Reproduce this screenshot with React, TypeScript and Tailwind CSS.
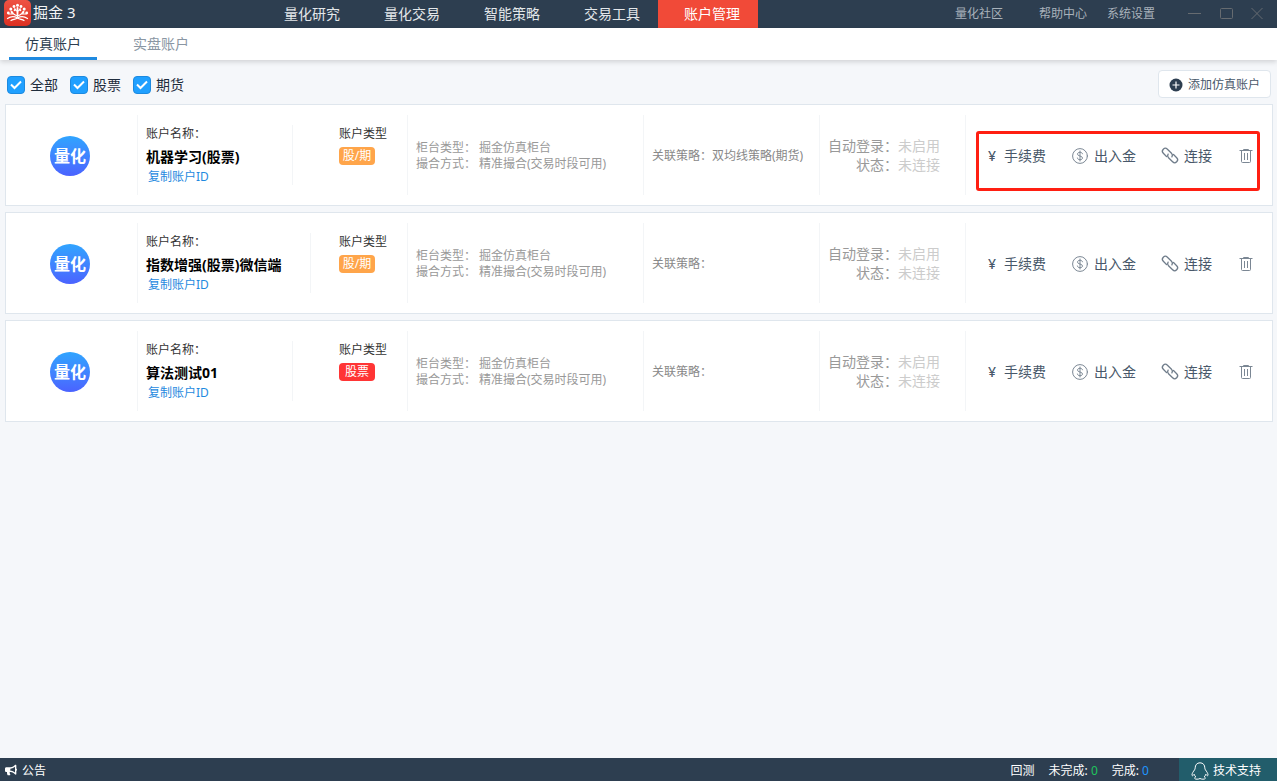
import React, { useState } from 'react';
import { FaBullhorn } from 'react-icons/fa';

const navItems = ['量化研究', '量化交易', '智能策略', '交易工具', '账户管理'];

const tabs = ['仿真账户', '实盘账户'];

const filters = ['全部', '股票', '期货'];

const accounts = [
  { name: '机器学习(股票)', type: '股/期', strategy: '双均线策略(期货)', highlighted: true },
  { name: '指数增强(股票)微信端', type: '股/期', strategy: '' },
  { name: '算法测试01', type: '股票', strategy: '' },
];

const Logo = () => (
  <svg className="h-[26px] w-[27px]" viewBox="0 0 27 26" aria-hidden="true">
    <defs>
      <linearGradient id="logoRed" x1="0" y1="0" x2="0" y2="1">
        <stop offset="0" stopColor="#ee5344" />
        <stop offset="1" stopColor="#dc3022" />
      </linearGradient>
    </defs>
    <rect width="27" height="26" rx="5" fill="url(#logoRed)" />
    <g fill="none" stroke="#fff" strokeLinecap="round">
      <path d="M13.500 8v8" strokeWidth="1.800" />
      <path d="M13.500 16C11 15 8.500 14 7 11M13.500 16C16 15 18.500 14 20 11" strokeWidth="1.100" />
      <path d="M13.500 12L10.500 8M13.500 12L16.500 8M9 14H5M18 14h4" strokeWidth="1" />
      <path d="M3.500 18.500c3-2 7-2.200 10-.5 3-1.700 7-1.500 10 .5" strokeWidth="1.300" />
      <path d="M7 20.500c2-1.200 4.500-1 6.500-2.500 2 1.500 4.500 1.300 6.500 2.500" strokeWidth="1.200" />
    </g>
    <g fill="#fff">
      <circle cx="13.500" cy="5.300" r="1.500" />
      <circle cx="10" cy="6.500" r="1.400" />
      <circle cx="17" cy="6.500" r="1.400" />
      <circle cx="6.800" cy="9" r="1.500" />
      <circle cx="20.200" cy="9" r="1.500" />
      <circle cx="4.300" cy="13" r="1.400" />
      <circle cx="22.700" cy="13" r="1.400" />
      <circle cx="10.800" cy="10.200" r="1.100" />
      <circle cx="16.200" cy="10.200" r="1.100" />
      <circle cx="8" cy="12.500" r="1.200" />
      <circle cx="19" cy="12.500" r="1.200" />
    </g>
  </svg>
);

const CoinIcon = () => (
  <svg className="size-4" viewBox="0 0 16 16" fill="none" stroke="#7b8794" strokeLinecap="round" aria-hidden="true">
    <circle cx="8" cy="8" r="7.400" />
    <path d="M8 3v10M10.500 5.800C10.300 4.800 9.300 4.300 8 4.300c-1.500 0-2.500.7-2.500 1.800 0 2.500 5 1.400 5 3.900 0 1.100-1.100 1.700-2.500 1.700s-2.500-.6-2.600-1.700" />
  </svg>
);

const LinkIcon = () => (
  <svg className="size-4 overflow-visible" viewBox="0 0 16 16" fill="none" stroke="#6f7c8a" strokeWidth="1.300" strokeLinecap="round" aria-hidden="true">
    <path d="M4.500 8.500L1.300 5.300a2.900 2.900 0 0 1 0-4.100 2.900 2.900 0 0 1 4.100 0l4.100 4.100a2.900 2.900 0 0 1 .4 3.600" />
    <path d="M11.500 6.500l3.200 3.200a2.900 2.900 0 0 1 0 4.100 2.900 2.900 0 0 1-4.100 0L6.500 9.700a2.900 2.900 0 0 1-.4-3.600" />
  </svg>
);

const TrashIcon = () => (
  <svg className="size-4" viewBox="0 0 16 16" fill="none" stroke="#7b8794" aria-hidden="true">
    <path d="M1.500 2.500h13M5.500 2.500v-1h5v1M3.500 2.500v11a1 1 0 0 0 1 1h7a1 1 0 0 0 1-1v-11M6.500 5v7M9.500 5v7" />
  </svg>
);

const PenguinIcon = () => (
  <svg className="size-[18px]" viewBox="0 0 18 18" fill="none" stroke="#fff" strokeLinejoin="round" aria-hidden="true">
    <path d="M9 .8c-3.200 0-4.800 2.400-4.800 5 0 .8-.3 1.400-.6 2C2.300 9.600 1 11.300 1 12.900c0 1 .7 1.100 1.400.3l.8-.9c.3 1 .8 1.900 1.600 2.600-.9.400-1.400.9-1.100 1.500.6 1.200 4 .9 5.300.1 1.300.8 4.700 1.100 5.300-.1.3-.6-.2-1.100-1.100-1.500.8-.7 1.300-1.600 1.600-2.600l.8.900c.7.8 1.400.7 1.400-.3 0-1.600-1.300-3.300-2.600-5.100-.3-.6-.6-1.200-.6-2 0-2.600-1.600-5-4.800-5z" />
  </svg>
);

const Header = () => (
  <header className="flex h-7 items-center bg-[#2d3e50] text-sm">
    <div className="flex w-[258px] items-center gap-0.5 self-start pl-1 text-[15px] text-gray-100">
      <Logo />
      掘金 3
    </div>
    <nav className="flex h-full">
      {navItems.map((item) => (
        <a
          key={item}
          href="#"
          className={`flex w-[100px] items-center pl-[26px] ${
            item === '账户管理' ? 'bg-[#f14a38] text-white' : 'text-[#e3e7ea]'
          }`}
        >
          {item}
        </a>
      ))}
    </nav>
    <div className="ml-auto flex items-center pr-3 text-xs text-[#a9b2bb]">
      <a href="#" className="mr-9">量化社区</a>
      <a href="#" className="mr-5">帮助中心</a>
      <a href="#" className="mr-8">系统设置</a>
      <div className="flex gap-[18px] text-[#666b70]">
        <button type="button" aria-label="最小化">
          <svg className="size-3.5" viewBox="0 0 14 14" stroke="currentColor"><path d="M1 6.500h13" /></svg>
        </button>
        <button type="button" aria-label="最大化">
          <svg className="size-3.5" viewBox="0 0 14 14" fill="none" stroke="currentColor"><rect x="1.500" y="1.500" width="12" height="10" rx="1" /></svg>
        </button>
        <button type="button" aria-label="关闭">
          <svg className="size-3.5" viewBox="0 0 14 14" stroke="currentColor"><path d="M.5 1l11 11M11.500 1l-11 11" /></svg>
        </button>
      </div>
    </div>
  </header>
);

const FilterBox = ({ label }: { label: string }) => {
  const [checked, setChecked] = useState(true);

  return (
    <label className="flex items-center gap-[5px]">
      <span className="grid size-[18px]">
        <input
          type="checkbox"
          checked={checked}
          onChange={() => setChecked(!checked)}
          className="col-start-1 row-start-1 size-[18px] appearance-none rounded border border-[#1c8ae0] bg-white checked:bg-[#20a0ff]"
        />
        {checked && (
          <svg className="pointer-events-none col-start-1 row-start-1 size-[18px]" viewBox="0 0 18 18" fill="none" stroke="#fff" strokeWidth="2">
            <path d="M4 8.500l3.500 3.500L14 5.500" />
          </svg>
        )}
      </span>
      {label}
    </label>
  );
};

const AccountCard = ({ account }: { account: (typeof accounts)[number] }) => (
  <li className="grid grid-cols-[131px_270px_236fr_176fr_146fr_307fr] border border-[#dfe6ed] bg-white py-2.5 text-xs">
    <div className="flex h-20 items-center pt-0.5 pl-11">
      <div className="flex size-10 items-center justify-center rounded-full bg-linear-to-b from-[#2fa4ff] to-[#4a62ff] text-base font-bold text-white">
        量化
      </div>
    </div>

    <div className="flex items-center justify-between border-l border-[#f3f5f7] pr-5 pl-2 text-[#333]">
      <div className="h-[60px] min-w-[147px] border-r border-[#f3f5f7] pr-7 leading-[18px]">
        <p>账户名称：</p>
        <h2 className="mt-0.5 text-sm leading-6 font-bold whitespace-nowrap text-black">{account.name}</h2>
        <button type="button" className="block pl-0.5 leading-4 text-[#1f8ae0]">复制账户ID</button>
      </div>
      <div className="h-[60px] leading-[18px]">
        <p>账户类型</p>
        <span
          className={`mt-1 flex h-[18px] w-9 items-center justify-center rounded text-white ${
            account.type === '股票' ? 'bg-[#ff3535]' : 'bg-[#ffa54a]'
          }`}
        >
          {account.type}
        </span>
      </div>
    </div>

    <dl className="grid grid-cols-[auto_1fr] content-center gap-x-[3px] border-l border-[#f3f5f7] pt-0.5 pl-2 leading-4 whitespace-nowrap text-[#999]">
      <dt>柜台类型：</dt>
      <dd>掘金仿真柜台</dd>
      <dt>撮合方式：</dt>
      <dd>精准撮合(交易时段可用)</dd>
    </dl>

    <div className="flex items-center border-l border-[#f3f5f7] pt-0.5 pl-2 whitespace-nowrap text-[#888]">
      关联策略：{account.strategy}
    </div>

    <dl className="grid grid-cols-[auto_1fr] content-center border-l border-[#f3f5f7] pl-2 text-sm leading-[19px] whitespace-nowrap text-[#999]">
      <dt className="text-right">自动登录：</dt>
      <dd className="text-[#ccc]">未启用</dd>
      <dt className="text-right">状态：</dt>
      <dd className="text-[#ccc]">未连接</dd>
    </dl>

    <div className="relative flex items-center justify-end gap-[26px] border-l border-[#f3f5f7] pt-0.5 pr-[18px] text-sm whitespace-nowrap text-[#48586a]">
      <button type="button" className="flex items-center gap-1.5">
        <span className="w-3 text-center font-medium">¥</span>
        手续费
      </button>
      <button type="button" className="flex items-center gap-1.5">
        <CoinIcon />
        出入金
      </button>
      <button type="button" className="flex items-center gap-1.5">
        <LinkIcon />
        连接
      </button>
      <button type="button" aria-label="删除">
        <TrashIcon />
      </button>
      {account.highlighted && (
        <div className="pointer-events-none absolute top-4 right-3 bottom-1 left-2.5 rounded-[3px] border-3 border-[#ff1f12]" />
      )}
    </div>
  </li>
);

const Footer = () => (
  <footer className="flex h-[23px] items-center bg-[#2d3e50] text-xs text-white">
    <FaBullhorn className="ml-[5px] size-3" />
    <span className="ml-[5px] pt-0.5">公告</span>
    <div className="ml-auto flex gap-3.5 pt-0.5 pr-[30px]">
      <span>回测</span>
      <span>未完成: <span className="text-[#1fc45c]">0</span></span>
      <span>完成: <span className="text-[#1f96ff]">0</span></span>
    </div>
    <button type="button" className="flex h-full items-center gap-1 bg-[#225d6b] pt-0.5 pr-4 pl-3">
      <PenguinIcon />
      技术支持
    </button>
  </footer>
);

const App = () => {
  const [activeTab, setActiveTab] = useState('仿真账户');

  return (
    <div className="flex min-h-screen flex-col bg-[#f5f7fa] font-['Noto_Sans','Noto_Sans_CJK_SC',sans-serif]">
      <Header />

      <div className="flex h-8 gap-5 bg-white pl-[9px] text-sm shadow-[0_2px_5px_rgba(0,0,0,0.15)]">
        {tabs.map((tab) => (
          <button
            key={tab}
            type="button"
            onClick={() => setActiveTab(tab)}
            className={`border-b-3 px-4 pt-0.5 ${
              tab === activeTab ? 'border-[#1f8ae0] text-[#2d3e50]' : 'border-transparent text-[#8a96a3]'
            }`}
          >
            {tab}
          </button>
        ))}
      </div>

      <main className="flex-1 pt-2.5 pr-1 pl-[5px]">
        <div className="flex h-7 items-center justify-between pr-0.5 pl-0.5">
          <div className="flex gap-3 pt-0.5 text-sm text-[#1f2d3d]">
            {filters.map((filter) => (
              <FilterBox key={filter} label={filter} />
            ))}
          </div>
          <button
            type="button"
            className="flex h-7 items-center gap-[5px] rounded border border-[#dfe6ed] bg-white px-2.5 pt-0.5 text-xs text-[#48586a]"
          >
            <svg className="size-3.5" viewBox="0 0 14 14" aria-hidden="true">
              <circle cx="7" cy="7" r="6.500" fill="#2d3e50" />
              <path d="M3.500 7h7M7 3.500v7" stroke="#fff" strokeWidth="1.200" />
            </svg>
            添加仿真账户
          </button>
        </div>

        <ul className="mt-1.5 flex flex-col gap-1.5">
          {accounts.map((account) => (
            <AccountCard key={account.name} account={account} />
          ))}
        </ul>
      </main>

      <Footer />
    </div>
  );
};

export default App;
